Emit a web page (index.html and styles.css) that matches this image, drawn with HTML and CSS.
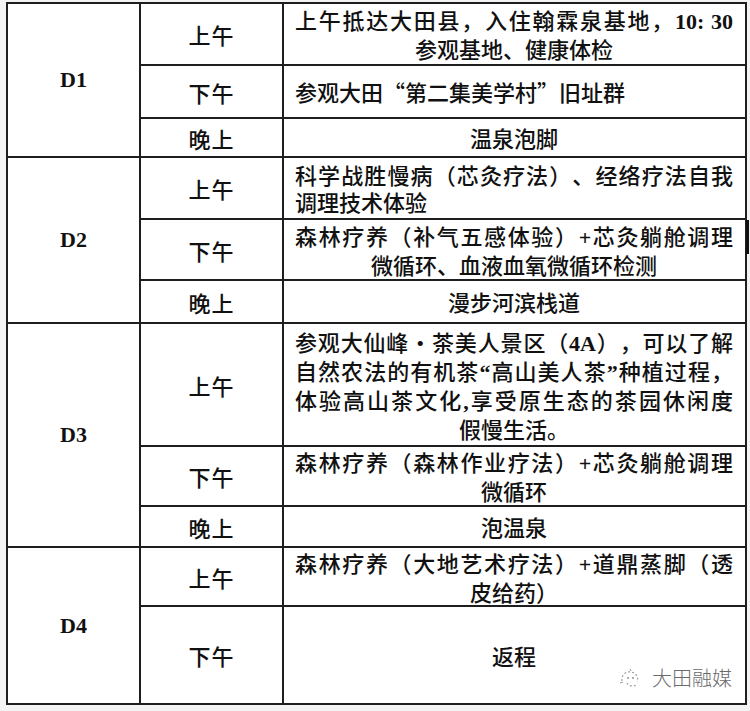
FILE: index.html
```html
<!DOCTYPE html>
<html lang="zh-CN">
<head>
<meta charset="utf-8">
<title>行程安排</title>
<link rel="stylesheet" href="styles.css">
</head>
<body>
<div class="page">
  <div class="sheet">
    <div class="cell day d1"><span class="lat">D1</span></div>
    <div class="cell time">上午</div>
    <div class="cell txt">
      <span class="ln jl">上午抵达大田县，入住翰霖泉基地，<span class="lat">10:</span> <span class="lat">30</span></span>
      <span class="ln lc">参观基地、健康体检</span>
    </div>
    <div class="cell time">下午</div>
    <div class="cell txt"><span class="ln ll">参观大田“第二集美学村”旧址群</span></div>
    <div class="cell time">晚上</div>
    <div class="cell txt"><span class="ln lc">温泉泡脚</span></div>

    <div class="cell day d1"><span class="lat">D2</span></div>
    <div class="cell time">上午</div>
    <div class="cell txt">
      <span class="ln jl">科学战胜慢病（芯灸疗法）、经络疗法自我</span>
      <span class="ln ll">调理技术体验</span>
    </div>
    <div class="cell time">下午</div>
    <div class="cell txt edge">
      <span class="ln jl">森林疗养（补气五感体验）<span class="lat">+</span>芯灸躺舱调理</span>
      <span class="ln lc">微循环、血液血氧微循环检测</span>
    </div>
    <div class="cell time">晚上</div>
    <div class="cell txt"><span class="ln lc">漫步河滨栈道</span></div>

    <div class="cell day d1"><span class="lat">D3</span></div>
    <div class="cell time">上午</div>
    <div class="cell txt">
      <span class="ln jl">参观大仙峰·茶美人景区（<span class="lat">4A</span>），可以了解</span>
      <span class="ln jl">自然农法的有机茶<span class="q">“</span>高山美人茶<span class="q">”</span>种植过程，</span>
      <span class="ln jl">体验高山茶文化<span class="q">,</span>享受原生态的茶园休闲度</span>
      <span class="ln lc">假慢生活。</span>
    </div>
    <div class="cell time">下午</div>
    <div class="cell txt">
      <span class="ln jl">森林疗养（森林作业疗法）<span class="lat">+</span>芯灸躺舱调理</span>
      <span class="ln lc">微循环</span>
    </div>
    <div class="cell time">晚上</div>
    <div class="cell txt"><span class="ln lc">泡温泉</span></div>

    <div class="cell day d4"><span class="lat">D4</span></div>
    <div class="cell time">上午</div>
    <div class="cell txt">
      <span class="ln jl">森林疗养（大地艺术疗法）<span class="lat">+</span>道鼎蒸脚（透</span>
      <span class="ln lc">皮给药）</span>
    </div>
    <div class="cell time">下午</div>
    <div class="cell txt"><span class="ln lc">返程</span></div>
  </div>

  <div class="mark">
    <svg class="mark-icon" width="24" height="22" viewBox="0 0 24 22" aria-hidden="true">
      <path d="M4 14 C3 8 8 4 13 5 C18 6 21 10 19 15" fill="none" stroke="#9a9a9a" stroke-width="1.1" stroke-dasharray="2 2"/>
      <path d="M9 16 C10 19 15 20 18 18" fill="none" stroke="#9a9a9a" stroke-width="1.1" stroke-dasharray="2 2"/>
      <circle cx="10" cy="11" r="0.9" fill="#888"/>
      <circle cx="15" cy="11" r="0.9" fill="#888"/>
      <path d="M2 16 L5 15" stroke="#9a9a9a" stroke-width="1"/>
      <path d="M12 2 L13 4" stroke="#9a9a9a" stroke-width="1"/>
    </svg>
    <span class="mark-text">大田融媒</span>
  </div>
</div>
</body>
</html>
```

FILE: styles.css
```css
html, body {
  margin: 0;
  padding: 0;
  background: #f3f3f3;
}

.page {
  position: relative;
  width: 750px;
  height: 711px;
  padding: 2px 0 0 6px;
  box-sizing: border-box;
}

.sheet {
  display: grid;
  grid-template-columns: 131px 141px 461px;
  grid-template-rows: 60px 51px 37px 60px 59px 41px 121px 58px 39px 57px 96px;
  gap: 2px;
  padding: 2px;
  width: max-content;
  background: #1e1e1e;
  font-family: "Liberation Serif", "Noto Sans CJK SC", serif;
  font-size: 22px;
  color: #111;
  text-spacing-trim: space-all;
  font-kerning: none;
}

.cell {
  background: #fff;
  display: flex;
  flex-direction: column;
  justify-content: center;
  font-family: "Noto Sans CJK SC", sans-serif;
  font-weight: 500;
}

.day {
  grid-row: span 3;
  align-items: center;
  font-size: 22px;
}

.day.d4 {
  grid-row: span 2;
}

.time {
  align-items: center;
  text-align: center;
  letter-spacing: 1px;
}

.txt {
  padding: 0 12px 0 11px;
  line-height: 27px;
}

.ln {
  display: block;
  white-space: nowrap;
}

.jl {
  text-align: justify;
  text-align-last: justify;
}

.lc {
  text-align: center;
}

.ll {
  text-align: left;
}

.lat {
  font-family: "Liberation Serif", serif;
  font-weight: 700;
}

.q {
  font-family: "Liberation Serif", serif;
  font-weight: 700;
}

.edge {
  position: relative;
}

.edge::after {
  content: "";
  position: absolute;
  right: -4px;
  top: 0;
  width: 3px;
  height: 34px;
  background: #111;
}

.mark {
  position: absolute;
  left: 618px;
  top: 663px;
  display: flex;
  align-items: center;
  gap: 10px;
}

.mark-text {
  font-family: "Noto Sans CJK SC", sans-serif;
  font-weight: 300;
  font-size: 20px;
  color: #6a6a6a;
}
```
